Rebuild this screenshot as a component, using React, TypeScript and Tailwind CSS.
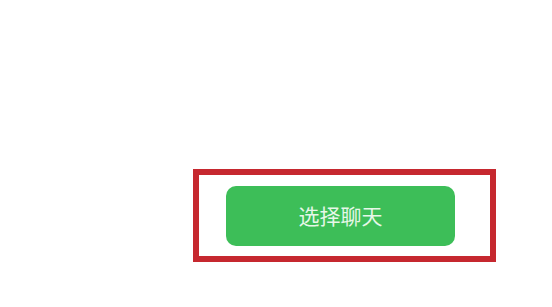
export default function App() {
  return (
    <div className="w-[552px] h-[307px] bg-white overflow-hidden" style={{ fontFamily: '"Noto Sans CJK SC", "Noto Sans", sans-serif' }}>
      <div className="pt-[169px] pl-[193px]">
        <div className="w-[303px] h-[93px] border-[6px] border-[#c6282f] flex items-center pl-[27px]">
          <button className="w-[229px] h-[60px] rounded-[10px] bg-[#3dbe58] text-[#e6f7e8] text-[21px] leading-none flex items-center justify-center">
            选择聊天
          </button>
        </div>
      </div>
    </div>
  );
}
